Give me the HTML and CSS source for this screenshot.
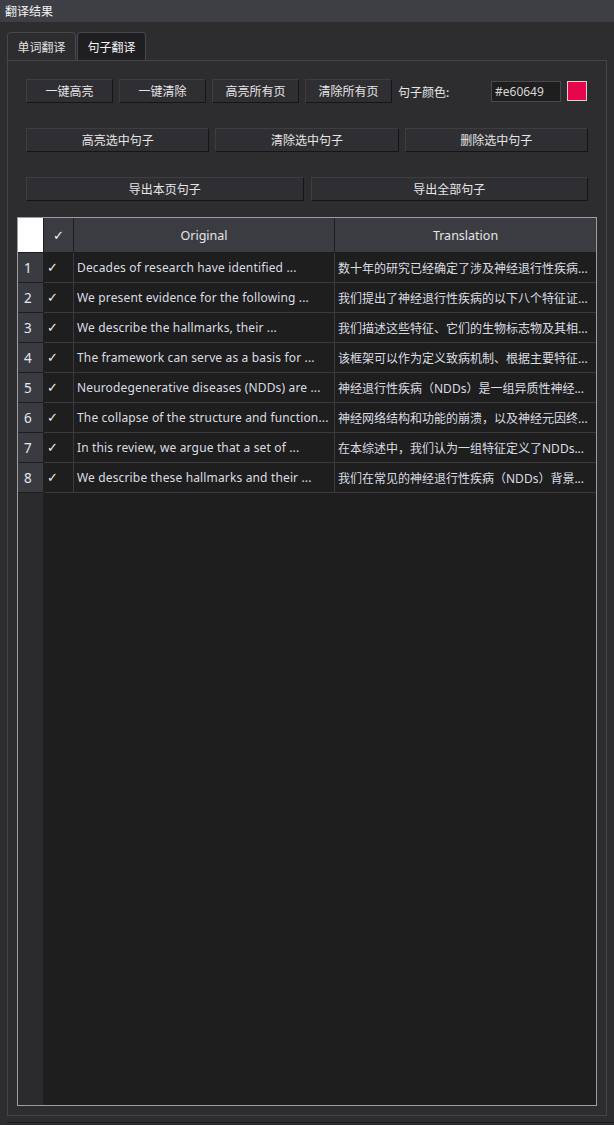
FILE: index.html
```html
<!DOCTYPE html>
<html lang="zh">
<head>
<meta charset="utf-8">
<title>翻译结果</title>
<link rel="stylesheet" href="styles.css">
</head>
<body>
<div class="window">
  <div class="titlebar">翻译结果</div>
  <div class="tabs">
    <div class="tab">单词翻译</div>
    <div class="tab active">句子翻译</div>
  </div>
  <div class="panel">
    <div class="toolbar">
      <div class="btn-row row-top">
        <button class="btn small">一键高亮</button>
        <button class="btn small">一键清除</button>
        <button class="btn small">高亮所有页</button>
        <button class="btn small">清除所有页</button>
        <span class="color-label">句子颜色:</span>
        <span class="color-input">#e60649</span>
        <span class="swatch"></span>
      </div>
      <div class="btn-row row-three">
        <button class="btn grow">高亮选中句子</button>
        <button class="btn grow">清除选中句子</button>
        <button class="btn grow">删除选中句子</button>
      </div>
      <div class="btn-row row-two">
        <button class="btn grow">导出本页句子</button>
        <button class="btn grow">导出全部句子</button>
      </div>
    </div>
    <div class="table">
      <div class="trow head">
        <div class="cell corner"></div>
        <div class="cell hcell check-h">✓</div>
        <div class="cell hcell">Original</div>
        <div class="cell hcell last">Translation</div>
      </div>
      <div class="trow">
        <div class="cell num">1</div>
        <div class="cell chk">✓</div>
        <div class="cell txt">Decades of research have identified ...</div>
        <div class="cell txt zh last">数十年的研究已经确定了涉及神经退行性疾病...</div>
      </div>
      <div class="trow">
        <div class="cell num">2</div>
        <div class="cell chk">✓</div>
        <div class="cell txt">We present evidence for the following ...</div>
        <div class="cell txt zh last">我们提出了神经退行性疾病的以下八个特征证...</div>
      </div>
      <div class="trow">
        <div class="cell num">3</div>
        <div class="cell chk">✓</div>
        <div class="cell txt">We describe the hallmarks, their ...</div>
        <div class="cell txt zh last">我们描述这些特征、它们的生物标志物及其相...</div>
      </div>
      <div class="trow">
        <div class="cell num">4</div>
        <div class="cell chk">✓</div>
        <div class="cell txt">The framework can serve as a basis for ...</div>
        <div class="cell txt zh last">该框架可以作为定义致病机制、根据主要特征...</div>
      </div>
      <div class="trow">
        <div class="cell num">5</div>
        <div class="cell chk">✓</div>
        <div class="cell txt">Neurodegenerative diseases (NDDs) are ...</div>
        <div class="cell txt zh last">神经退行性疾病（NDDs）是一组异质性神经...</div>
      </div>
      <div class="trow">
        <div class="cell num">6</div>
        <div class="cell chk">✓</div>
        <div class="cell txt">The collapse of the structure and function...</div>
        <div class="cell txt zh last">神经网络结构和功能的崩溃，以及神经元因终...</div>
      </div>
      <div class="trow">
        <div class="cell num">7</div>
        <div class="cell chk">✓</div>
        <div class="cell txt">In this review, we argue that a set of ...</div>
        <div class="cell txt zh last">在本综述中，我们认为一组特征定义了NDDs...</div>
      </div>
      <div class="trow">
        <div class="cell num">8</div>
        <div class="cell chk">✓</div>
        <div class="cell txt">We describe these hallmarks and their ...</div>
        <div class="cell txt zh last">我们在常见的神经退行性疾病（NDDs）背景...</div>
      </div>
      <div class="filler">
        <div class="filler-head"></div>
        <div class="filler-body"></div>
      </div>
    </div>
  </div>
  <div class="footer"><div class="footer-line"></div></div>
</div>
</body>
</html>
```

FILE: styles.css
```css
* { box-sizing: border-box; }

html, body {
  margin: 0;
  padding: 0;
  background: #2d2d30;
}

body {
  font-family: "Noto Sans", "Noto Sans CJK SC", sans-serif;
  font-size: 12px;
  color: #e2e2e2;
}

.window {
  width: 614px;
  height: 1125px;
  display: flex;
  flex-direction: column;
  background: #2d2d30;
}

.titlebar {
  height: 22px;
  background: #3e3f45;
  color: #f2f2f2;
  font-family: "Noto Sans CJK SC", sans-serif;
  font-size: 12px;
  line-height: 22px;
  padding-left: 5px;
  flex: none;
}

.tabs {
  display: flex;
  gap: 1px;
  margin-top: 10px;
  padding-left: 7px;
  height: 28px;
  flex: none;
}

.tab {
  width: 69px;
  height: 28px;
  border: 1px solid #47474d;
  border-bottom: none;
  border-radius: 4px 4px 0 0;
  background: #2d2d30;
  color: #e0e0e0;
  font-family: "Noto Sans CJK SC", sans-serif;
  font-size: 12px;
  line-height: 27px;
  text-align: center;
}

.tab.active {
  background: #1f1f21;
  color: #f4f4f4;
}

.panel {
  flex: 1;
  margin: 0 7px;
  border: 1px solid #434349;
  padding: 18px 9px 9px 9px;
  display: flex;
  flex-direction: column;
  min-height: 0;
}

.toolbar {
  padding: 0 9px;
  display: flex;
  flex-direction: column;
  gap: 25px;
  margin-bottom: 16px;
}

.btn-row {
  display: flex;
  align-items: center;
  height: 24px;
}

.row-top { gap: 6px; }
.row-three { gap: 6px; }
.row-two { gap: 7px; }

.btn {
  height: 24px;
  margin: 0;
  padding: 0;
  background: #2f2f33;
  border: 1px solid #3d3d42;
  border-right-color: #151517;
  border-bottom-color: #151517;
  color: #e6e6e6;
  font-family: "Noto Sans CJK SC", sans-serif;
  font-size: 12px;
  line-height: 22px;
  text-align: center;
}

.btn.small { width: 87px; flex: none; }
.btn.grow { flex: 1; }

.color-label {
  width: 87px;
  flex: none;
  font-family: "Noto Sans CJK SC", sans-serif;
  font-size: 12px;
  color: #e6e6e6;
}

.color-input {
  width: 70px;
  height: 21px;
  flex: none;
  background: #1e1e1f;
  border: 1px solid #48484d;
  color: #d6d6d6;
  font-family: "Noto Sans", sans-serif;
  font-size: 12px;
  line-height: 19px;
  padding-left: 3px;
}

.swatch {
  width: 20px;
  height: 20px;
  flex: none;
  background: #e60649;
  border: 1px solid #d2d2d2;
}

.table {
  flex: 1;
  border: 1px solid #9c9ca4;
  background: #1e1e1f;
  display: flex;
  flex-direction: column;
  min-height: 0;
}

.trow {
  display: grid;
  grid-template-columns: 26px 30px 261px 261px;
  height: 30px;
  flex: none;
}

.trow.head { height: 35px; }

.cell {
  border-right: 1px solid #3a3a3e;
  border-bottom: 1px solid #3a3a3e;
  overflow: hidden;
  white-space: nowrap;
  display: flex;
  align-items: center;
}

.cell.last { border-right: none; }

.corner {
  background: #ffffff;
  border-right: 1px solid #1e1e1f;
  border-bottom: 1px solid #1e1e1f;
}

.hcell {
  background: #3b3c42;
  border-right-color: #1e1e1f;
  border-bottom-color: #1e1e1f;
  justify-content: center;
  color: #e6e6e6;
  font-size: 12.5px;
}

.check-h {
  font-family: "DejaVu Sans", sans-serif;
  font-size: 13px;
  color: #f2f2f2;
}

.num {
  background: #3a3b40;
  border-right-color: #1e1e1f;
  border-bottom-color: #1e1e1f;
  padding-left: 6px;
  color: #e2e8f2;
  font-size: 13.5px;
}

.chk {
  padding-left: 3px;
  font-family: "DejaVu Sans", sans-serif;
  font-size: 13px;
  color: #f0f0f0;
}

.txt {
  padding-left: 3px;
  color: #dadde2;
  font-size: 12px;
  letter-spacing: 0.15px;
}

.txt.zh { letter-spacing: 0; }

.filler {
  flex: 1;
  display: grid;
  grid-template-columns: 25px 1fr;
}

.filler-head { background: #2b2b2e; }
.filler-body { background: #1e1e1f; }

.footer {
  height: 9px;
  flex: none;
  padding: 6px 0 0 7px;
}

.footer-line {
  height: 1px;
  background: #1a1a1c;
}
```
